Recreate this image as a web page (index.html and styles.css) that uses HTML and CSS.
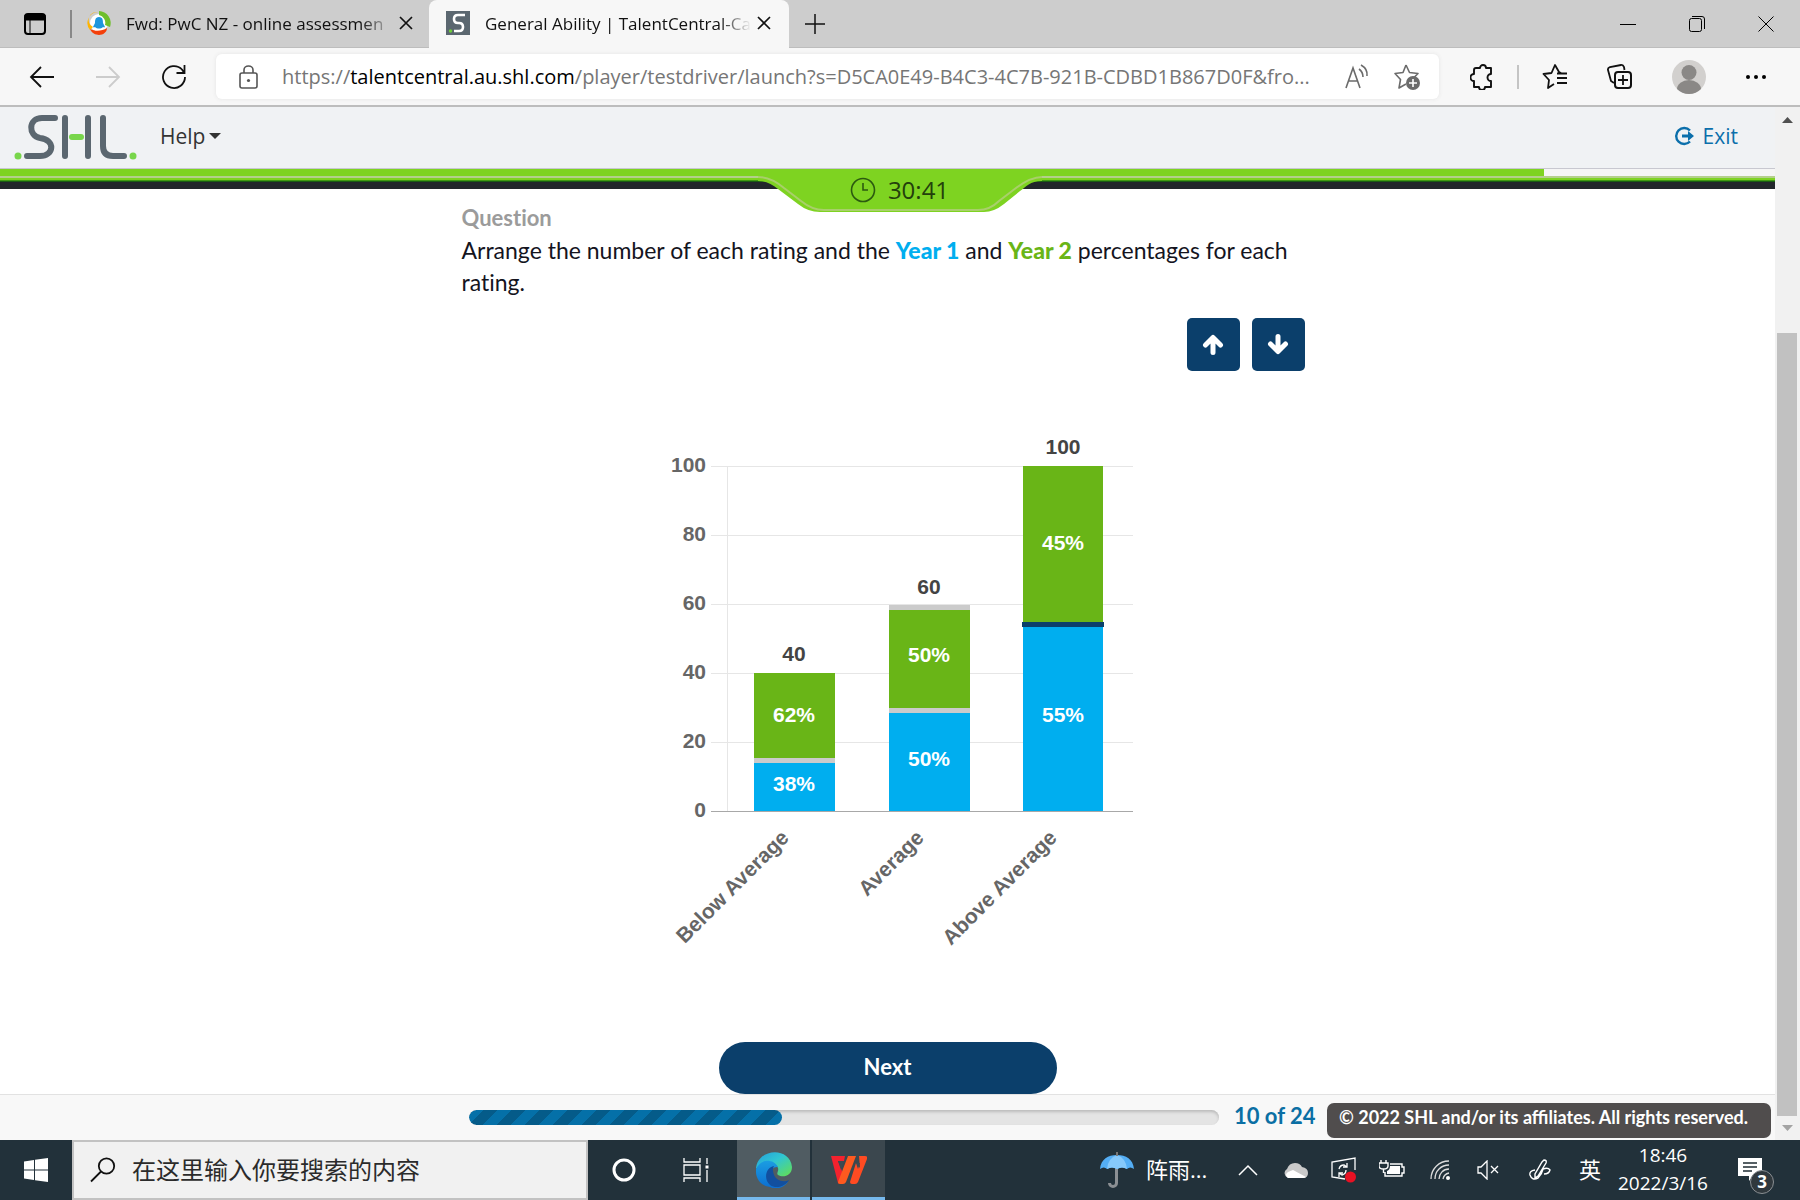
FILE: index.html
```html
<!DOCTYPE html>
<html lang="en">
<head>
<meta charset="utf-8">
<title>General Ability | TalentCentral</title>
<link rel="stylesheet" href="styles.css">
</head>
<body>
<header class="tabstrip">
  <button class="icon-btn tab-actions" aria-label="Tab actions"><svg width="24" height="24" viewBox="0 0 24 24"><rect x="2" y="2" width="20" height="20" rx="3" fill="none" stroke="#000" stroke-width="2"/><path d="M2 3h20v5H2zM7 8v13" stroke="#000" fill="#000"/></svg></button>
  <div class="tab tab-back">
    <svg width="24" height="24" viewBox="0 0 24 24"><circle cx="12" cy="12" r="9" fill="#fff"/><path d="M11 1A11 11 0 0 0 3 19l3-3A8 8 0 0 1 11 1z" fill="#ffb400"/><path d="M12 0a12 12 0 0 1 11 16l-5-2A8 8 0 0 0 12 4z" fill="#6fbf2c"/><path d="M3 18c6 3 12 2 17-1 0 8-13 10-17 1z" fill="#f4400b"/><path d="M12 6c4 0 4 4 4 6l2 4c-1 1-2 0-2 0-2 2-6 2-8 0 0 0-1 1-2 0l2-4c0-2 0-6 4-6z" fill="#1e96dc"/></svg>
    <span class="tab-title">Fwd: PwC NZ - online assessmen</span>
    <button class="icon-btn" aria-label="Close tab"><svg width="14" height="14" viewBox="0 0 14 14"><path d="M1 1l12 12M13 1L1 13" stroke="#111" stroke-width="1.700"/></svg></button>
  </div>
  <div class="tab tab-front">
    <svg width="24" height="24" viewBox="0 0 24 24"><path d="M0 0h24v24H0z" fill="#5b6770"/><path d="M19 4h-7q-4 0-4 4t4 4h1q4 0 4 4t-4 4H8" fill="none" stroke="#fff" stroke-width="2.6"/><circle cx="4.500" cy="20" r="1.700" fill="#6fcf3a"/></svg>
    <span class="tab-title">General Ability | TalentCentral-Ca</span>
    <button class="icon-btn" aria-label="Close tab"><svg width="14" height="14" viewBox="0 0 14 14"><path d="M1 1l12 12M13 1L1 13" stroke="#111" stroke-width="1.700"/></svg></button>
  </div>
  <button class="icon-btn new-tab" aria-label="New tab"><svg width="22" height="22" viewBox="0 0 22 22"><path d="M11 1v20M1 11h20" stroke="#111" stroke-width="1.500"/></svg></button>
  <div class="window-controls">
    <button class="icon-btn" aria-label="Minimize"><svg width="16" height="16" viewBox="0 0 16 16"><path d="M0 8.500h16" stroke="#000"/></svg></button>
    <button class="icon-btn" aria-label="Restore"><svg width="16" height="16" viewBox="0 0 16 16"><path d="M3 .5h10q2.500 0 2.500 2.500v10" stroke="#000" fill="none"/><rect x=".5" y="2.500" width="12" height="13" rx="2" stroke="#000" fill="none"/></svg></button>
    <button class="icon-btn" aria-label="Close"><svg width="16" height="16" viewBox="0 0 16 16"><path d="M.5.500l15 15M15.500.500l-15 15" stroke="#000"/></svg></button>
  </div>
</header>

<nav class="toolbar" aria-label="Browser">
  <div class="nav-buttons">
    <button class="icon-btn" aria-label="Back"><svg width="26" height="24" viewBox="0 0 26 24"><path d="M25 12H2M12 2L2 12l10 10" fill="none" stroke="#111" stroke-width="1.800"/></svg></button>
    <button class="icon-btn" aria-label="Forward"><svg width="26" height="24" viewBox="0 0 26 24"><path d="M1 12h23M14 2l10 10-10 10" fill="none" stroke="#ccc" stroke-width="1.800"/></svg></button>
    <button class="icon-btn" aria-label="Refresh"><svg width="26" height="26" viewBox="0 0 26 26"><path d="M24 13A11 11 0 1 1 21 5.500l2 3M23.500 1v8h-8" fill="none" stroke="#111" stroke-width="1.800"/></svg></button>
  </div>
  <div class="address">
    <svg width="20" height="24" viewBox="0 0 20 24"><rect x="1" y="8" width="17" height="15" rx="2" fill="none" stroke="#555" stroke-width="1.600"/><path d="M5 8V5a4.500 4 0 0 1 9 0v3" fill="none" stroke="#555" stroke-width="1.600"/><circle cx="9.500" cy="15.500" r="1.600" fill="#555"/></svg>
    <div class="url" role="textbox" aria-label="Address">https://<b>talentcentral.au.shl.com</b>/player/testdriver/launch?s=D5CA0E49-B4C3-4C7B-921B-CDBD1B867D0F&amp;fro...</div>
    <button class="icon-btn" aria-label="Read aloud"><svg width="26" height="26" viewBox="0 0 26 26"><path d="M2 24L9 4l7 20M4.500 17h9M15 5q4 3 4 8M17 1q7 4 6 11" fill="none" stroke="#6b6b6b" stroke-width="1.600"/></svg></button>
    <button class="icon-btn" aria-label="Add to favorites"><svg width="28" height="28" viewBox="0 0 28 28"><path d="M13 2l3.500 7.500 8.500 1-5 5M13 21l-7 4 1.500-8.500L2 10.500l8-1L13 2" fill="none" stroke="#6b6b6b" stroke-width="1.600" stroke-linejoin="round"/><circle cx="20" cy="20" r="7" fill="#6b6b6b"/><path d="M20 16v8M16 20h8" stroke="#fff" stroke-width="1.600"/></svg></button>
  </div>
  <div class="tools">
    <div class="tool-group">
      <button class="icon-btn" aria-label="Extensions"><svg width="24" height="26" viewBox="0 0 24 26"><path d="M6 4h4a3 3 0 0 1 6 0h5v6a3 3 0 0 0 0 7v6h-6a3 3 0 0 1-6 0H4v-6a3 3 0 0 1 0-7V6q0-2 2-2z" fill="none" stroke="#111" stroke-width="1.900" stroke-linejoin="round"/></svg></button>
      <span class="divider"></span>
      <button class="icon-btn" aria-label="Favorites"><svg width="26" height="26" viewBox="0 0 26 26"><path d="M12 20l-6 4 1-8-5.500-6 8-1L13 1l4 7 2 1M15 9.500h10M15 14h10M15 19h10" fill="none" stroke="#111" stroke-width="1.800" stroke-linejoin="round"/></svg></button>
    </div>
    <button class="icon-btn" aria-label="Collections"><svg width="26" height="26" viewBox="0 0 26 26"><path d="M7 19L4 17 1 6q-.5-2 2-3L14 1q2-.5 3 2l.5 3" fill="none" stroke="#111" stroke-width="1.800"/><rect x="8" y="8" width="16" height="16" rx="3" fill="none" stroke="#111" stroke-width="2"/><path d="M16 11v10M11 16h10" stroke="#111" stroke-width="1.800"/></svg></button>
    <button class="icon-btn" aria-label="Profile"><svg width="34" height="34" viewBox="0 0 34 34"><circle cx="17" cy="17" r="17" fill="#d2d0ce"/><circle cx="17" cy="12.500" r="7.500" fill="#8a8886"/><path d="M5 29a12 9 0 0 1 24 0 17 17 0 0 1-24 0z" fill="#8a8886"/></svg></button>
    <button class="icon-btn" aria-label="Settings and more"><svg width="22" height="6" viewBox="0 0 22 6"><circle cx="3" cy="3" r="2" /><circle cx="11" cy="3" r="2"/><circle cx="19" cy="3" r="2"/></svg></button>
  </div>
</nav>

<div class="viewport">
  <div class="page">
    <div class="app-header">
      <svg width="124" height="48" viewBox="0 0 124 48" role="img" aria-label="SHL"><g fill="none" stroke="#5b6770" stroke-width="6" stroke-linecap="round" stroke-linejoin="round"><path d="M41 4H28C14 4 14 22 26 24C42 26 40 42 26 42H13"/><path d="M51 4v38M74 4v38M89 4v28q0 10 10 10h11"/></g><path d="M58 23h9" stroke="#78d64b" stroke-width="6" stroke-linecap="round"/><circle cx="4" cy="42" r="3.500" fill="#78d64b"/><circle cx="119" cy="42" r="3.500" fill="#78d64b"/></svg>
      <button class="help">Help<svg width="12" height="6" viewBox="0 0 12 6"><path d="M0 0h12L6 6z" fill="#333"/></svg></button>
      <a class="exit" href="#"><svg width="20" height="20" viewBox="0 0 20 20"><path d="M16 4.500A8 8 0 1 0 16 15.500" fill="none" stroke="#0b6fab" stroke-width="2.400"/><path d="M8 8.500h6V5l6 5-6 5v-3.500H8z" fill="#0b6fab"/></svg>Exit</a>
    </div>
    <div class="time-strip">
      <div class="time-left"></div>
      <div class="timer">
        <svg width="284" height="44" viewBox="0 0 284 44"><path d="M0 0H284V12C272 12 268 18 262 22L246 35Q236 43 226 43H62Q50 43 40 35L20 20C14 15 8 12 0 12z" fill="#7ed321"/><path d="M0 8C10 8 20 14 26 19L43 32Q54 41 66 41H220Q232 41 241 32L258 19C266 13 274 8 284 8" fill="none" stroke="#a9cf6b" stroke-width="2"/></svg>
        <div class="timer-text"><svg width="26" height="26" viewBox="0 0 26 26"><circle cx="13" cy="13" r="11.500" fill="none" stroke="#2c5a10" stroke-width="1.600"/><path d="M13 6v7h5" fill="none" stroke="#2c5a10" stroke-width="1.600"/></svg><time>30:41</time></div>
      </div>
    </div>
    <main class="question">
      <h1>Question</h1>
      <p>Arrange the number of each rating and the <strong class="year1">Year 1</strong> and <strong class="year2">Year 2</strong> percentages for each rating.</p>
      <div class="arrows">
        <button aria-label="Increase"><svg width="22" height="22" viewBox="0 0 22 22"><path d="M11 18.500V4M3.500 11L11 3.500l7.500 7.500" fill="none" stroke="#fff" stroke-width="5" stroke-linecap="round" stroke-linejoin="round"/></svg></button>
        <button aria-label="Decrease"><svg width="22" height="22" viewBox="0 0 22 22"><path d="M11 2.500V17M3.500 10l7.500 7.500 7.500-7.500" fill="none" stroke="#fff" stroke-width="5" stroke-linecap="round" stroke-linejoin="round"/></svg></button>
      </div>
      <svg class="chart" width="480" height="530" viewBox="648 431 480 530" role="img" aria-label="Ratings by year">
        <g class="grid"><path d="M711 466.500h422M711 535.500h422M711 604.500h422M711 673.500h422M711 742.500h422M727.500 466v345"/></g>
        <path class="base" d="M711 811.500h422"/>
        <g class="green"><path d="M754 673h81v85h-81zM889 610h81v98h-81zM1023 466h80v156h-80z"/></g>
        <g class="blue"><path d="M754 763h81v48h-81zM889 713h81v98h-81zM1023 627h80v184h-80z"/></g>
        <path class="handle" d="M754 758h81v5h-81zM889 605h81v5h-81zM889 708h81v5h-81z"/>
        <path class="handle-on" d="M1022 622h82v5h-82z"/>
        <g class="axis" text-anchor="end">
          <text x="706" y="472">100</text><text x="706" y="541">80</text><text x="706" y="610">60</text><text x="706" y="679">40</text><text x="706" y="748">20</text><text x="706" y="817">0</text>
          <text transform="translate(790 839) rotate(-45)">Below Average</text>
          <text transform="translate(925 839) rotate(-45)">Average</text>
          <text transform="translate(1058 839) rotate(-45)">Above Average</text>
        </g>
        <g class="totals" text-anchor="middle"><text x="794" y="661">40</text><text x="929" y="594">60</text><text x="1063" y="454">100</text></g>
        <g class="shares" text-anchor="middle"><text x="794" y="722">62%</text><text x="794" y="791">38%</text><text x="929" y="662">50%</text><text x="929" y="766">50%</text><text x="1063" y="550">45%</text><text x="1063" y="722">55%</text></g>
      </svg>
      <button class="next">Next</button>
    </main>
    <footer class="footer">
      <div class="progress" role="progressbar" aria-valuenow="10" aria-valuemax="24" aria-label="Questions"><div class="progress-fill" style="width:41.700%"></div></div>
      <div class="count">10 of 24</div>
      <div class="copyright">© 2022 SHL and/or its affiliates. All rights reserved.</div>
    </footer>
  </div>
  <div class="scrollbar" aria-hidden="true">
    <svg width="25" height="25" viewBox="0 0 25 25"><path d="M7 16h11l-5.500-6z" fill="#505050"/></svg>
    <div class="scroll-gap"></div>
    <div class="scroll-thumb"></div>
    <svg width="25" height="24" viewBox="0 0 25 24"><path d="M7 9h11l-5.500 6z" fill="#a3a3a3"/></svg>
  </div>
</div>

<div class="taskbar">
  <button class="start" aria-label="Start"><svg width="24" height="24" viewBox="0 0 24 24"><path d="M0 3.500l10-1.500v9.500H0zM11 1.800L24 0v11.500H11zM0 12.500h10V22L0 20.500zM11 12.500h13V24l-13-1.800z" fill="#fff"/></svg></button>
  <label class="search"><svg width="26" height="26" viewBox="0 0 26 26"><circle cx="16.500" cy="9" r="7.700" fill="none" stroke="#111" stroke-width="1.800"/><path d="M11 14.500L1 24.500" stroke="#111" stroke-width="1.800"/></svg><input type="text" placeholder="在这里输入你要搜索的内容" aria-label="搜索"></label>
  <button class="task" aria-label="Cortana"><svg width="24" height="24" viewBox="0 0 24 24"><circle cx="12" cy="12" r="10" fill="none" stroke="#fff" stroke-width="3"/></svg></button>
  <button class="task" aria-label="Task view"><svg width="26" height="24" viewBox="0 0 26 24" fill="none" stroke="#fff" stroke-width="1.300"><path d="M1 0v4h16V0M1 24v-4h16v4M1 7h16v10H1zM24 0v6M24 12v12"/><path d="M22.500 7.500h3v3h-3z" fill="#fff" stroke="none"/></svg></button>
  <button class="app app-active" aria-label="Edge"><svg width="36" height="36" viewBox="0 0 36 36"><defs><linearGradient id="edgeTop" x1="0" y1="0" x2="1" y2="1"><stop offset="0" stop-color="#249fdc"/><stop offset=".45" stop-color="#30c6d2"/><stop offset="1" stop-color="#66e04c"/></linearGradient><linearGradient id="edgeBlue" x1="0" y1="0" x2="0" y2="1"><stop offset="0" stop-color="#1b9de2"/><stop offset="1" stop-color="#0c6dd0"/></linearGradient></defs><path d="M0 17C1-4 34-6 36 15c0 9-9 11-14 8-2-2 1-3 0-7C19 8 6 9 0 17z" fill="url(#edgeTop)"/><path d="M0 17c4-10 17-11 22-2-6-1-9 6-6 12 3 5 10 6 16 3-6 8-15 7-18 5C5 34-1 26 0 17z" fill="url(#edgeBlue)"/><path d="M18 14c-8 1-11 13-4 19 7 5 17 0 19-5-6 3-13 0-15-5-1-3-2-6 0-9z" fill="#124f9f"/></svg></button>
  <button class="app" aria-label="WPS Office"><svg width="36" height="28" viewBox="0 0 36 28"><path d="M0 0h14l-1 5H7l6 15-4 7q-1 1-2 0z" fill="#f4222e"/><path d="M7 5h6l-3 9z" fill="#3d4a51"/><path d="M17 0h8L15 26q-1 2-3 2H9q-2 0-2-2z" fill="#ff5a1f"/><path d="M28 0h6q3 0 2 3l-9 23q-1 2-3 2h-3q-2 0-2-2l6-19 4 5z" fill="#ff4b22"/><path d="M25 7h4l-2 6z" fill="#3d4a51"/></svg></button>
  <div class="tray">
    <button class="weather"><svg width="34" height="36" viewBox="0 0 34 36"><path d="M16.500 15v16a3.500 3.500 0 0 1-7 0" fill="none" stroke="#8b8f93" stroke-width="3"/><path d="M0 17C1 7 8 3 17 3s16 4 17 14q-4-3-7 0-5-3-10 0-5-3-10 0-3-3-7 0z" fill="#54aef5"/><path d="M17 3q-9 3-10 14 5-3 10 0 5-3 10 0Q26 6 17 3z" fill="#86c9fb"/><path d="M17 0v4" stroke="#777" stroke-width="2"/></svg><span>阵雨...</span></button>
    <button class="tray-icon" aria-label="Show hidden icons"><svg width="20" height="12" viewBox="0 0 20 12"><path d="M1 11l9-9 9 9" fill="none" stroke="#fff" stroke-width="1.500"/></svg></button>
    <button class="tray-icon" aria-label="OneDrive"><svg width="26" height="18" viewBox="0 0 26 18"><path d="M5 17a5 5 0 0 1-1-9Q6 2 12 2q5 0 7 4 6 1 6 6 0 5-5 5z" fill="#c9c9c9"/><path d="M5 17q-4-3 0-6l5-2 13 7q-1 1-3 1z" fill="#fff"/></svg></button>
    <button class="tray-icon" aria-label="Update"><svg width="26" height="26" viewBox="0 0 26 26"><path d="M14 22L1 20V5l23-4v12M8 12q1-4 5-4l3 2M16 6v4h-4M15 13q0 4-4 5l-3-2M8 20v-4h4" fill="none" stroke="#fff" stroke-width="1.300"/><circle cx="19.500" cy="20" r="5.500" fill="#e81123"/></svg></button>
    <button class="tray-icon" aria-label="Battery"><svg width="26" height="20" viewBox="0 0 26 20"><path d="M11 4h12v3h2v6h-2v3H6v-4M2 0v3M7 0v3M0 3h9v3q0 3-4.500 3Q0 9 0 6zM4.500 9v4" fill="none" stroke="#fff" stroke-width="1.400"/><path d="M11 6h10v8H8v-3q3-1 3-5z" fill="#fff"/></svg></button>
    <button class="tray-icon" aria-label="Wi-Fi"><svg width="20" height="20" viewBox="0 0 20 20"><path d="M1 19C1 9 9 1 19 1M5 19C5 11 11 5 19 5M9 19c0-5 4-10 10-10M13 19q1-5 6-6" fill="none" stroke="#ddd" stroke-width="1.300"/><circle cx="18" cy="18" r="2" fill="#fff"/></svg></button>
    <button class="tray-icon" aria-label="Muted"><svg width="22" height="20" viewBox="0 0 22 20"><path d="M1 7h3l6-6v18l-6-6H1zM14 6l7 7M21 6l-7 7" fill="none" stroke="#fff" stroke-width="1.300"/></svg></button>
    <button class="tray-icon pen" aria-label="Pen"><svg width="22" height="22" viewBox="0 0 22 22"><path d="M15 1q3 0 2 3L9 17l-3 2 0-4L13 3zM6 11q-6 1-5 5 2 6 8 3 4-4 5-9 5-2 7 1-1 4-6 4" fill="none" stroke="#fff" stroke-width="1.400"/></svg></button>
    <button class="ime">英</button>
    <button class="clock"><time>18:46</time><time>2022/3/16</time></button>
    <button class="notices" aria-label="3 notifications"><svg width="24" height="24" viewBox="0 0 24 24"><path d="M0 0h24v18h-9l-4 5v-5H0z" fill="#fff"/><path d="M5 5h14M5 9h14M5 13h9" stroke="#1f2c33" stroke-width="1.500"/></svg><span class="badge">3</span></button>
  </div>
</div>
</body>
</html>
```
FILE: styles.css
```css
* { box-sizing: border-box; }
body {
  margin: 0;
  min-height: 100vh;
  display: flex;
  flex-direction: column;
  font-family: "Open Sans", "Noto Sans CJK SC", sans-serif;
  font-size: 20px;
  color: #111;
  background: #fff;
}
button { border: 0; padding: 0; background: none; color: inherit; font: inherit; }
svg { display: block; flex: none; }
.icon-btn { display: flex; align-items: center; justify-content: center; flex: none; }

/* Browser tabs */
.tabstrip { display: flex; height: 48px; background: #cdcdcd; border-bottom: 1px solid #bdbdbd; }
.tab-actions { width: 72px; height: 28px; margin-top: 10px; border-right: 2px solid #888; }
.tab { display: flex; align-items: center; width: 357px; height: 48px; padding: 0 16px 2px 15px; gap: 6px; font-size: 17px; }
.tab-front { width: 360px; padding: 0 18px 2px 17px; background: #f7f7f7; border-radius: 8px 8px 0 0; }
.tab-title {
  flex: 1; margin-left: 9px; overflow: hidden; white-space: nowrap;
  mask-image: linear-gradient(to right, #000 88%, transparent);
}
.new-tab { width: 52px; }
.window-controls { display: flex; margin-left: auto; }
.window-controls .icon-btn { width: 69px; }

/* Browser toolbar */
.toolbar {
  display: flex; align-items: center; height: 59px;
  background: #f7f7f7; border-bottom: 2px solid #bdbdbd;
}
.nav-buttons { display: flex; gap: 40px; padding: 0 29px; }
.address {
  flex: 1; min-width: 0; display: flex; align-items: center; gap: 23px;
  height: 45px; padding: 0 18px 0 23px; background: #fff; border-radius: 6px;
  box-shadow: 0 0 4px #e4e4e4;
}
.url { flex: 1; overflow: hidden; white-space: nowrap; color: #767676; }
.url b { font-weight: 400; color: #000; }
.tools { display: flex; align-items: center; gap: 39px; width: 361px; padding-left: 31px; }
.tool-group { display: flex; align-items: center; gap: 23px; }
.divider { width: 2px; height: 24px; background: #c4c4c4; }

/* Page area */
.viewport { flex: 1; display: flex; }
.page { flex: 1; min-width: 0; display: flex; flex-direction: column; }
.app-header {
  display: flex; align-items: center; height: 62px; padding: 0 37px 0 14px;
  background: #f0f2f4; border-bottom: 1px solid #c8c8d0; font-size: 21px;
}
.help { display: flex; align-items: center; gap: 4px; margin-left: 22px; padding-bottom: 4px; color: #333; }
.exit {
  display: flex; align-items: center; gap: 9px; margin-left: auto; padding-bottom: 4px;
  color: #0b6fab; text-decoration: none;
}
.time-strip {
  position: relative; height: 20px;
  background: linear-gradient(#f5f5f5 7px, #b4cf8c 7px 9px, #7ed321 9px 11px, #3f9a12 11px 12px, #1a5c14 12px 13px, #22262b 13px);
}
.time-left { width: 87%; height: 7px; background: #7ed321; }
.timer { position: absolute; top: 0; left: calc(50% - 130px); width: 284px; }
.timer-text {
  position: absolute; inset: 7px 0 auto 0; display: flex; align-items: center; justify-content: center;
  gap: 12px; font-size: 24px; line-height: 28px; color: #23400c;
}

/* Question */
.question {
  flex: 1; display: flex; flex-direction: column; align-items: center;
  width: 852px; max-width: 100%; margin: 0 auto; padding-top: 13px;
  font-family: Lato, sans-serif; font-variant-ligatures: none; color: #14141e;
}
.question h1 { align-self: stretch; margin: 0; font-size: 22px; line-height: 32px; color: #9b9b9b; }
.question p { align-self: stretch; margin: 0; font-size: 23px; line-height: 32px; }
.year1 { color: #00aeef; font-weight: 900; }
.year2 { color: #69b517; font-weight: 900; }
.arrows { display: flex; gap: 12px; align-self: flex-end; margin: 20px 9px 0 0; }
.arrows button {
  display: flex; align-items: center; justify-content: center;
  width: 53px; height: 53px; border-radius: 5px; background: #0b3f6b;
}
.chart { margin-top: 60px; overflow: visible; font: bold 21px "Liberation Sans", Arial, sans-serif; }
.grid { fill: none; stroke: #e6e6e6; stroke-width: 1; }
.base { stroke: #a8a8a8; stroke-width: 1; }
.green { fill: #69b517; }
.blue { fill: #00aeef; }
.handle { fill: #cbcbcb; }
.handle-on { fill: #0b3f6b; }
.axis { fill: #666; }
.totals { fill: #444; }
.shares { fill: #fff; }
.next {
  width: 338px; height: 52px; margin-top: auto; padding-bottom: 4px; border-radius: 26px;
  background: #0b3f6b; color: #fff; font-size: 22px; font-weight: 700;
}

/* Footer */
.footer {
  display: flex; align-items: center; justify-content: flex-end; gap: 15px;
  height: 46px; padding-right: 4px; background: #f8f8f8; border-top: 1px solid #e2e2e2;
  font-family: Lato, sans-serif;
}
.progress {
  width: 750px; height: 15px; border-radius: 8px; overflow: hidden;
  background: #e4e4e4; box-shadow: inset 0 2px 3px #bbb;
}
.progress-fill {
  height: 100%; border-radius: 8px;
  background: repeating-linear-gradient(135deg, #0570a8 0 10px, #055b89 10px 20px);
}
.count { width: 78px; padding-bottom: 4px; white-space: nowrap; color: #0b6fa4; font-size: 22px; font-weight: 700; text-align: center; }
.copyright {
  width: 444px; height: 35px; margin-top: 6px; padding-left: 12px; border-radius: 7px;
  background: #504d4d; color: #fff; font-size: 18px; line-height: 28px; font-weight: 700; white-space: nowrap;
}

.scrollbar { width: 25px; display: flex; flex-direction: column; background: #f1f1f1; }
.scroll-gap { flex: 201; }
.scroll-thumb { flex: 783; margin: 0 3px 0 2px; background: #c1c1c1; }

/* Taskbar */
.taskbar { display: flex; height: 60px; background: #22313a; color: #fff; }
.start { width: 72px; display: flex; align-items: center; justify-content: center; }
.search {
  display: flex; align-items: center; gap: 16px; width: 516px; padding: 0 16px;
  background: #f1f1f1; border: 2px solid #c2c2c2;
}
.search input {
  flex: 1; min-width: 0; border: 0; padding: 0 0 3px; background: none;
  font: 24px "Noto Sans CJK SC", sans-serif;
}
.search input::placeholder { color: #2b2b2b; opacity: 1; }
.task { width: 72px; display: flex; align-items: center; justify-content: center; }
.app {
  width: 73px; margin-left: 2px; display: flex; align-items: center; justify-content: center;
  background: #3b474e; border-bottom: 3px solid #76b9ed; padding-top: 3px;
}
.app-active { background: #505c62; margin-left: 5px; }
.tray { display: flex; align-items: center; margin-left: auto; padding-right: 6px; }
.weather { display: flex; align-items: center; gap: 12px; width: 124px; font-size: 22px; white-space: nowrap; }
.weather span { padding-bottom: 4px; }
.tray-icon { display: flex; align-items: center; justify-content: center; width: 48px; height: 60px; }
.pen { width: 56px; }
.ime { width: 44px; padding-bottom: 4px; font-family: "Noto Sans CJK SC", sans-serif; font-size: 22px; }
.clock { display: flex; flex-direction: column; align-items: center; width: 102px; padding-bottom: 2px; font-size: 19px; line-height: 28px; }
.notices { position: relative; width: 80px; height: 60px; padding-left: 24px; display: flex; align-items: center; }
.badge {
  position: absolute; left: 36px; top: 30px; width: 24px; height: 24px; border-radius: 50%;
  background: #30383d; border: 1px solid #8a8f93; font-size: 17px; line-height: 22px; font-weight: 700;
}
```
